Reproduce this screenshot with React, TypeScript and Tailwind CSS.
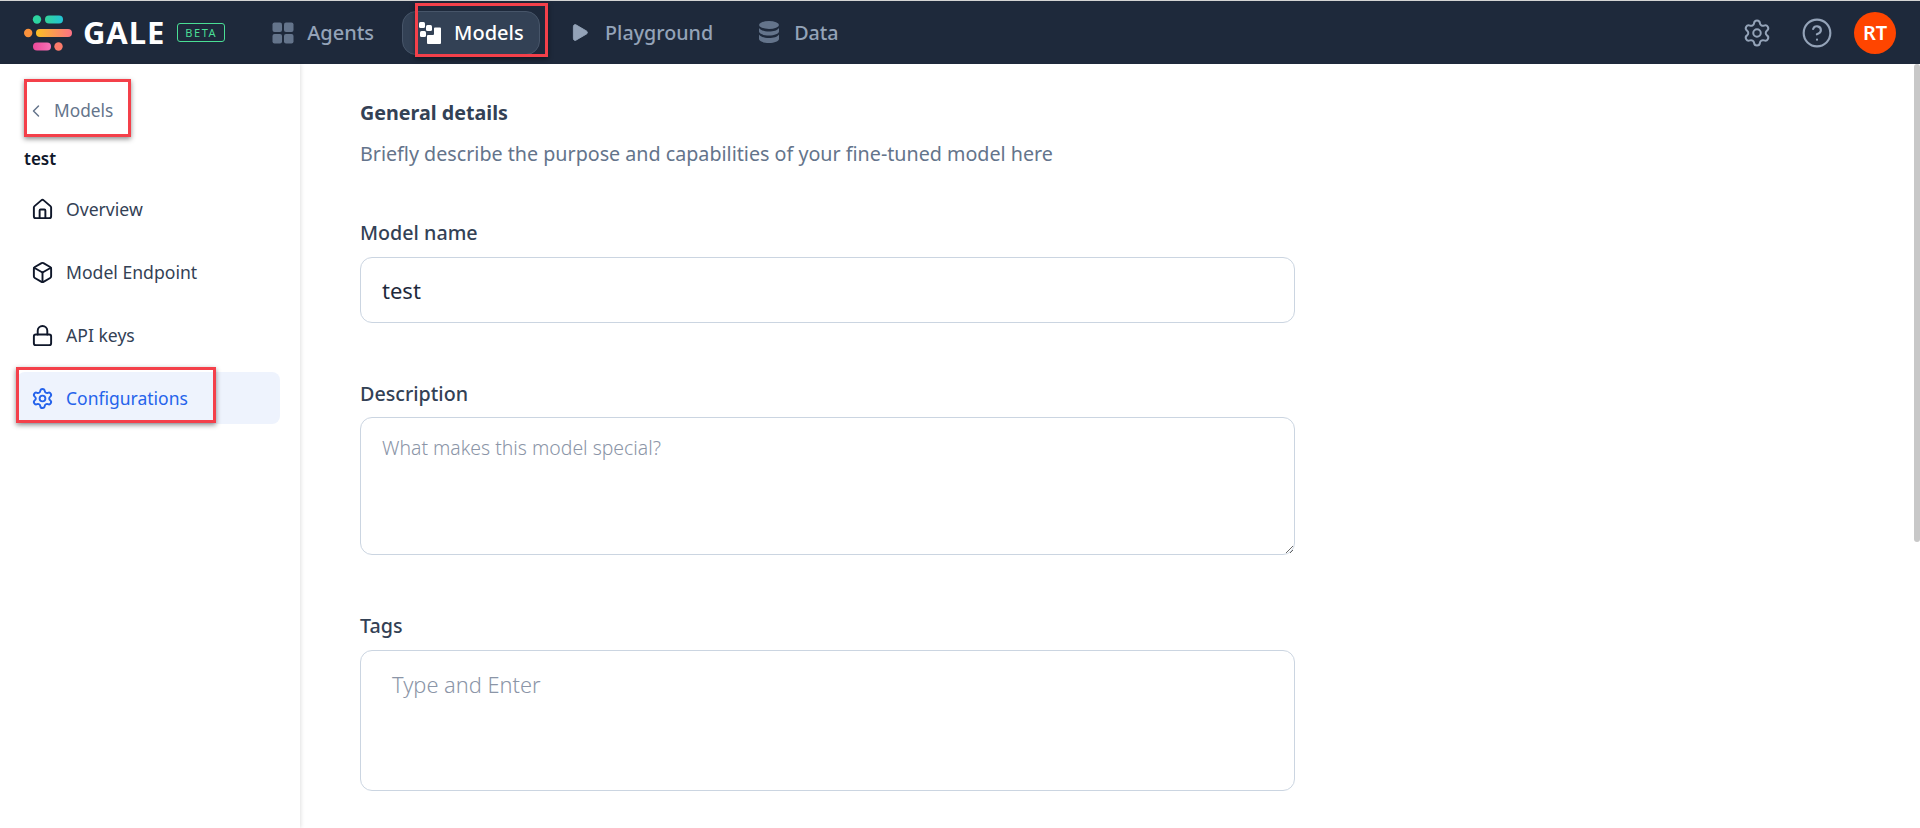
import { ChevronLeft, House, Box, Lock, Settings, CircleHelp, Play } from 'lucide-react';

const font = { fontFamily: '"Noto Sans", sans-serif' };

const RedBox = ({ className }: { className: string }) => (
  <div className={`pointer-events-none absolute border-[3px] border-[#f4404a] shadow-[0_2px_5px_rgba(0,0,0,0.45)] ${className}`} />
);

const GaleLogo = () => (
  <svg width="48" height="36" viewBox="0 0 48 36" fill="none">
    <defs>
      <linearGradient id="tealBar" x1="0" x2="1" y1="0" y2="0">
        <stop offset="0" stopColor="#34d399" />
        <stop offset="1" stopColor="#22c3d6" />
      </linearGradient>
      <linearGradient id="midBar" x1="0" x2="1" y1="0" y2="0">
        <stop offset="0" stopColor="#fbbf24" />
        <stop offset="1" stopColor="#fb7185" />
      </linearGradient>
      <linearGradient id="pinkBar" x1="0" x2="1" y1="0" y2="0">
        <stop offset="0" stopColor="#ec4899" />
        <stop offset="1" stopColor="#f472b6" />
      </linearGradient>
    </defs>
    <circle cx="13" cy="4.5" r="4.2" fill="#2dd4a0" />
    <rect x="21" y="0.5" width="18" height="8" rx="4" fill="url(#tealBar)" />
    <circle cx="4.2" cy="18" r="4.2" fill="#fb923c" />
    <rect x="12" y="14" width="36" height="8" rx="4" fill="url(#midBar)" />
    <rect x="9" y="27.5" width="18" height="8" rx="4" fill="url(#pinkBar)" />
    <circle cx="34.5" cy="31.5" r="4.2" fill="#fb7b6b" />
  </svg>
);

const AgentsIcon = () => (
  <svg width="22" height="22" viewBox="0 0 22 22" fill="#64748b">
    <rect x="0.5" y="0.5" width="9.5" height="9.5" rx="2" />
    <rect x="12" y="0.5" width="9.5" height="9.5" rx="2" />
    <rect x="0.5" y="12" width="9.5" height="9.5" rx="2" />
    <rect x="12" y="12" width="9.5" height="9.5" rx="2" />
  </svg>
);

const ModelsIcon = () => (
  <svg width="22" height="22" viewBox="0 0 22 22" fill="#ffffff">
    <rect x="0" y="0" width="6" height="6" rx="1.5" />
    <rect x="7" y="3" width="6" height="6" rx="1.5" />
    <rect x="1" y="9" width="6" height="6" rx="1.5" />
    <path d="M15 6.5a1 1 0 0 1 1-1h5a1 1 0 0 1 1 1V21a1 1 0 0 1-1 1H9a1 1 0 0 1-1-1v-7a1 1 0 0 1 1-1h5a1 1 0 0 0 1-1z" />
  </svg>
);

const DataIcon = () => (
  <svg width="22" height="22" viewBox="0 0 22 22" fill="#64748b">
    <ellipse cx="11" cy="4" rx="10" ry="4" />
    <path d="M1 7c1.5 2.4 5.5 3.6 10 3.6S19.500 9.400 21 7v3.500c0 2.300-4.500 4-10 4s-10-1.700-10-4z" />
    <path d="M1 13.500c1.500 2.400 5.500 3.600 10 3.600s8.500-1.200 10-3.600V18c0 2.300-4.500 4-10 4S1 20.300 1 18z" />
  </svg>
);

const sideItems = [
  { label: 'Overview', icon: House },
  { label: 'Model Endpoint', icon: Box },
  { label: 'API keys', icon: Lock },
];

export default function App() {
  return (
    <div className="relative flex h-screen flex-col overflow-hidden bg-white" style={font}>
      <div className="h-px shrink-0 bg-[#d4d4d4]" />
      <header className="flex h-[63px] shrink-0 items-center bg-[#1e293b] pl-6 pr-[24px]">
        <GaleLogo />
        <span className="ml-[11px] text-[31px] font-bold leading-none tracking-[0.9px] text-white">GALE</span>
        <span className="ml-[12px] flex h-[19px] w-[48px] items-center justify-center rounded-[3px] border border-[#4ade95] text-[11px] leading-none tracking-[1.5px] text-[#4ade95]">BETA</span>
        <nav className="ml-[47px] flex items-center">
          <a className="flex items-center gap-[13px] text-[20px] font-medium text-[#94a3b8]">
            <AgentsIcon /> Agents
          </a>
          <div className="relative ml-[28px]">
            <a className="flex h-[44px] w-[138px] items-center gap-[13px] rounded-[14px] border border-[#475569] bg-[#334155] pl-4 text-[20px] font-medium text-white">
              <ModelsIcon /> Models
            </a>
            <RedBox className="-top-[8px] left-[13px] h-[54px] w-[133px]" />
          </div>
          <a className="ml-[29px] flex items-center gap-[15px] text-[19.7px] font-medium text-[#94a3b8]">
            <Play size={21} fill="#94a3b8" strokeWidth={1} /> Playground
          </a>
          <a className="ml-[45px] flex items-center gap-[14px] text-[19.7px] font-medium text-[#94a3b8]">
            <DataIcon /> Data
          </a>
        </nav>
        <div className="ml-auto flex items-center">
          <Settings size={30} strokeWidth={1.6} className="text-[#94a3b8]" />
          <CircleHelp size={32} strokeWidth={1.6} className="ml-[29px] text-[#94a3b8]" />
          <div className="ml-[21px] flex h-[42px] w-[42px] items-center justify-center rounded-full bg-[#ff4500] text-[20px] font-semibold text-white">RT</div>
        </div>
      </header>

      <div className="flex min-h-0 flex-1">
        <aside className="flex w-[300px] shrink-0 flex-col px-4 shadow-[1px_0_4px_rgba(0,0,0,0.12)]">
          <div className="relative mt-[33px] flex items-center gap-[8px] pl-[10px] text-[17.3px] leading-[28px] text-[#64748b]">
            <ChevronLeft size={20} strokeWidth={1.75} /> Models
            <RedBox className="-top-[18px] left-[8px] h-[58px] w-[107px]" />
          </div>
          <p className="ml-2 mt-[22px] text-[17px] font-semibold leading-[24px] text-[#0f172a]">test</p>
          <ul className="ml-[1px] mt-[12px] flex w-[263px] flex-col gap-[11px]">
            {sideItems.map(({ label, icon: Icon }) => (
              <li key={label} className="flex h-[52px] items-center gap-[12px] pl-[14px] text-[17.6px] text-[#334155]">
                <Icon size={23} strokeWidth={2} className="text-[#0f172a]" /> {label}
              </li>
            ))}
            <li className="relative flex h-[52px] items-center gap-[12px] rounded-lg bg-[#eef3fd] pl-[14px] text-[17.5px] text-[#2563eb]">
              <Settings size={23} strokeWidth={2} /> Configurations
              <RedBox className="-left-[1px] -top-[5px] h-[56px] w-[200px]" />
            </li>
          </ul>
        </aside>

        <main className="min-w-0 flex-1 pl-[60px] pt-[35px]">
          <div className="w-[935px]">
            <h2 className="text-[19.7px] font-bold leading-[28px] text-[#334155]">General details</h2>
            <p className="mt-[13px] text-[19.7px] leading-[28px] text-[#64748b]">Briefly describe the purpose and capabilities of your fine-tuned model here</p>

            <label className="mt-[51px] block text-[19.7px] font-medium leading-[28px] text-[#334155]">Model name</label>
            <div className="mt-[10px] flex h-[66px] items-center rounded-xl border border-[#cbd5e1] px-[21px] text-[22px] text-[#1e293b]">test</div>

            <label className="mt-[57px] block text-[19.7px] font-medium leading-[28px] text-[#334155]">Description</label>
            <textarea
              readOnly
              placeholder="What makes this model special?"
              className="mt-[9px] block h-[138px] w-full rounded-xl border border-[#cbd5e1] px-[21px] py-[16px] text-[19.4px] font-light leading-[28px] outline-none placeholder:text-[#8b95a7]"
            />

            <label className="mt-[57px] block text-[19.7px] font-medium leading-[28px] text-[#334155]">Tags</label>
            <div className="mt-[10px] h-[141px] rounded-xl border border-[#cbd5e1] px-[31px] py-[18px] text-[21.8px] font-light leading-[32px] text-[#8b95a7]">Type and Enter</div>
          </div>
        </main>
      </div>

      <div className="absolute right-0 top-[64px] h-[478px] w-[6px] rounded-[3px] bg-[#c8c8c8]" />
    </div>
  );
}
